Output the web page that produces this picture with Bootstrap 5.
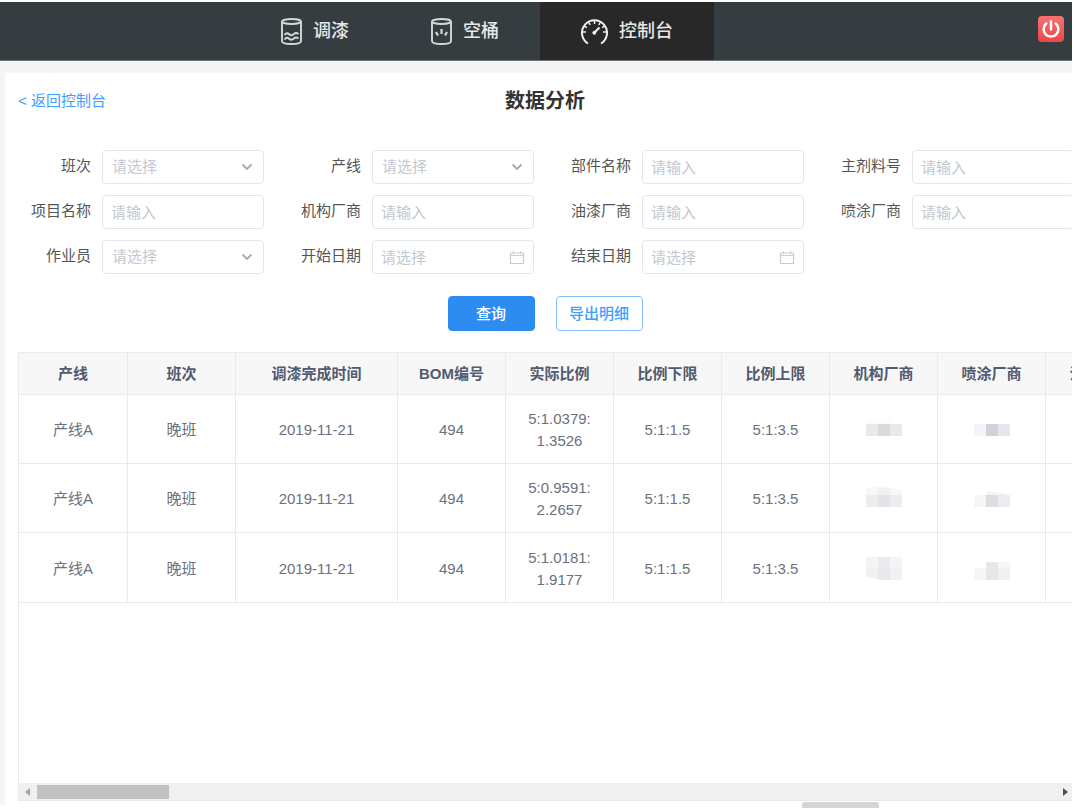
<!DOCTYPE html>
<html lang="zh-CN">
<head>
<meta charset="utf-8">
<meta name="viewport" content="width=device-width, initial-scale=1">
<title>数据分析</title>
<link href="https://cdn.jsdelivr.net/npm/bootstrap@5.3.0/dist/css/bootstrap.min.css" rel="stylesheet">
<style>
  body { font-family: "Liberation Sans", "Noto Sans CJK SC", sans-serif; font-size: 15px; color: #555; background: #fff; padding: 2px 2px 3px 0; overflow: hidden; }
  .top-bar { height: 59px; background: #363d40; padding-left: 240px; padding-right: 8px; border-bottom: 1px solid #6d7274; }
  .top-item { padding: 0 41px; gap: 11px; color: #e6e8e8; font-size: 18px; font-weight: 500; white-space: nowrap; }
  .top-item.active { background: #282828; }
  .top-item svg { display: block; }
  .power-btn { width: 26px; height: 26px; border-radius: 4px; background: linear-gradient(#f57272, #ef4646); margin-bottom: 5px; }
  .page-area { background: #f5f5f5; padding: 12px 0 0 5px; min-height: 0; }
  .panel { background: #fff; padding: 12px 0 4px 13px; min-width: 0; overflow: hidden; }
  .back-link { color: #409eff; line-height: 32px; }
  .page-title { font-size: 20px; line-height: 32px; font-weight: 700; color: #333; }
  .filters { display: grid; grid-template-columns: repeat(4, 246px); gap: 11px 24px; margin-top: 33px; }
  .field-label { width: 84px; padding-right: 11px; line-height: 32px; text-align: right; white-space: nowrap; }
  .field-box { width: 162px; height: 34px; border: 1px solid #e3e6ea; border-radius: 4px; padding: 0 8px; font-size: 15px; line-height: 32px; color: #c3c7cf; background-color: #fff; box-shadow: none; }
  .field-box::placeholder { color: #c3c7cf; opacity: 1; }
  select.field-box { padding-left: 9px; background-image: url("data:image/svg+xml,%3Csvg xmlns='http://www.w3.org/2000/svg' width='12' height='8'%3E%3Cpath d='M1.5 1.5 6 6l4.500-4.500' fill='none' stroke='%23a3a8b4' stroke-width='1.800'/%3E%3C/svg%3E"); background-size: 12px 8px; background-position: right 10px center; }
  .date-box { background-image: url("data:image/svg+xml,%3Csvg xmlns='http://www.w3.org/2000/svg' width='16' height='15'%3E%3Cpath d='M1.500 3h13v10.500h-13zM1.500 5.500h13M4.500 1v3M11.500 1v3' fill='none' stroke='%23c9ccd3' stroke-width='1.200'/%3E%3C/svg%3E"); background-repeat: no-repeat; background-position: right 8px center; }
  .act { width: 87px; height: 35px; padding: 0; font-size: 15px; border-radius: 4px; font-weight: 500; line-height: 31px; }
  .act-main { background: #2d8cf0; border-color: #2d8cf0; color: #fff; }
  .act-line { border-color: #83bdfa; color: #409eff; background: #fff; }
  .grid-box { border: 1px solid #e8eaec; border-right: 0; overflow: hidden; min-height: 0; }
  .data-grid { table-layout: fixed; width: 1243px; color: #6b7180; text-align: center; line-height: 22px; margin: 0; border-collapse: separate; border-spacing: 0; }
  .data-grid th { height: 42px; background: #f7f7f8; color: #515a6e; font-weight: 700; padding: 0; white-space: nowrap; }
  .data-grid td { height: 69px; padding: 2px 16px 0; }
  .data-grid th, .data-grid td { border-right: 1px solid #e8ebed; border-bottom: 1px solid #e8ebed; }
  .data-grid tr:last-child td { height: 70px; }
  .data-grid svg { display: block; margin: 0 auto; }
  .scroll-track { height: 17px; background: #f0f0f0; padding: 0 4px 0 6px; }
  .scroll-thumb { width: 132px; height: 14px; background: #c1c1c1; margin-left: 6px; }
  .page-thumb { width: 77px; height: 6px; right: 195px; bottom: 0; background: #d5d5d5; border-radius: 3px 3px 0 0; }
</style>
</head>
<body class="vh-100 d-flex flex-column position-relative">
<nav class="top-bar d-flex align-items-stretch flex-shrink-0">
  <a href="#" class="top-item d-flex align-items-center text-decoration-none">
    <svg width="21" height="27" viewBox="0 0 21 27" fill="none" stroke="#d5d8d9" stroke-width="1.900"><ellipse cx="10.500" cy="3.500" rx="9.500" ry="2.500"/><path d="M1 3.500V23c0 1.800 4 3 9.500 3s9.500-1.200 9.500-3V3.500"/><path d="M3.500 17q2.200-3 4.600-.8t4.600 0T17.500 16M3.500 21.500q2.200-3 4.600-.8t4.600 0T17.500 20.500"/></svg>
    <span>调漆</span></a>
  <a href="#" class="top-item d-flex align-items-center text-decoration-none">
    <svg width="21" height="27" viewBox="0 0 21 27" fill="none" stroke="#d5d8d9" stroke-width="1.900"><ellipse cx="10.500" cy="3.500" rx="9.500" ry="2.500"/><path d="M1 3.500V23c0 1.800 4 3 9.500 3s9.500-1.200 9.500-3V3.500"/><path stroke-width="2.200" d="M10.500 11v5M5 14l2 3.500M16 14l-2 3.500"/></svg>
    <span>空桶</span></a>
  <a href="#" class="top-item active d-flex align-items-center text-decoration-none" aria-current="page">
    <svg width="27" height="28" viewBox="0 0 27 28" fill="none" stroke="#f0f0f0" stroke-width="2"><path d="M7 26.500A12.500 12.500 0 1 1 20 26.500"/><path stroke-width="1.500" d="M13.500 3v4M7.500 5l1.700 3M19.500 5l-1.700 3M3.200 9l2.700 1.700M23.800 9l-2.700 1.700M1.500 15h3.500M25.500 15H22"/><path stroke-width="2.200" d="m13.500 15.500 5-5"/><circle cx="13.300" cy="15.800" r="1.500" fill="#f0f0f0" stroke-width="1"/></svg>
    <span>控制台</span></a>
  <button type="button" class="power-btn btn border-0 p-0 ms-auto align-self-center d-flex" aria-label="退出">
    <svg width="26" height="26" viewBox="0 0 26 26" fill="none" stroke="#fff" stroke-width="2.500" stroke-linecap="round"><path d="M13 5.500v8M8.300 7.500a7.400 7.400 0 1 0 9.400 0"/></svg>
  </button>
</nav>
<main class="page-area flex-fill d-flex flex-column">
  <section class="panel flex-fill d-flex flex-column">
    <header class="d-flex">
      <div class="col"><a href="#" class="back-link text-decoration-none">&lt; 返回控制台</a></div>
      <h1 class="page-title m-0">数据分析</h1>
      <div class="col"></div>
    </header>
    <form class="d-flex flex-column">
      <div class="filters">
        <div class="d-flex"><label class="field-label" for="shift">班次</label><select id="shift" class="form-select field-box"><option>请选择</option></select></div>
        <div class="d-flex"><label class="field-label" for="line">产线</label><select id="line" class="form-select field-box"><option>请选择</option></select></div>
        <div class="d-flex"><label class="field-label" for="part">部件名称</label><input id="part" type="text" class="form-control field-box" placeholder="请输入"></div>
        <div class="d-flex"><label class="field-label" for="agent">主剂料号</label><input id="agent" type="text" class="form-control field-box" placeholder="请输入"></div>
        <div class="d-flex"><label class="field-label" for="project">项目名称</label><input id="project" type="text" class="form-control field-box" placeholder="请输入"></div>
        <div class="d-flex"><label class="field-label" for="maker">机构厂商</label><input id="maker" type="text" class="form-control field-box" placeholder="请输入"></div>
        <div class="d-flex"><label class="field-label" for="paint">油漆厂商</label><input id="paint" type="text" class="form-control field-box" placeholder="请输入"></div>
        <div class="d-flex"><label class="field-label" for="spray">喷涂厂商</label><input id="spray" type="text" class="form-control field-box" placeholder="请输入"></div>
        <div class="d-flex"><label class="field-label" for="worker">作业员</label><select id="worker" class="form-select field-box"><option>请选择</option></select></div>
        <div class="d-flex"><label class="field-label" for="from">开始日期</label><input id="from" type="text" class="form-control field-box date-box" placeholder="请选择"></div>
        <div class="d-flex"><label class="field-label" for="to">结束日期</label><input id="to" type="text" class="form-control field-box date-box" placeholder="请选择"></div>
      </div>
      <div class="d-flex justify-content-center" style="gap:21px;margin:22px 0 21px">
        <button type="button" class="btn act act-main">查询</button>
        <button type="button" class="btn act act-line">导出明细</button>
      </div>
    </form>
    <div class="grid-box flex-fill d-flex flex-column">
      <div class="flex-fill overflow-hidden">
        <table class="data-grid">
          <colgroup><col style="width:109px"><col style="width:108px"><col style="width:162px"><col span="8" style="width:108px"></colgroup>
          <thead><tr><th>产线</th><th>班次</th><th>调漆完成时间</th><th>BOM编号</th><th>实际比例</th><th>比例下限</th><th>比例上限</th><th>机构厂商</th><th>喷涂厂商</th><th>油漆厂商</th></tr></thead>
          <tbody>
            <tr><td>产线A</td><td>晚班</td><td>2019-11-21</td><td>494</td><td>5:1.0379:<br>1.3526</td><td>5:1:1.5</td><td>5:1:3.5</td>
              <td><svg width="36" height="24"><path fill="#fcfcfc" d="M0 0h24v6H0z"/><path fill="#e8e9ea" d="M0 6h36v12H0z"/><path fill="#d9dade" d="M12 6h12v12H12z"/></svg></td>
              <td><svg width="36" height="24"><path fill="#f4f5f8" d="M0 6h12v12H0z"/><path fill="#d2d3d9" d="M12 6h12v12H12z"/><path fill="#e6e7eb" d="M24 6h12v12H24z"/></svg></td><td></td></tr>
            <tr><td>产线A</td><td>晚班</td><td>2019-11-21</td><td>494</td><td>5:0.9591:<br>2.2657</td><td>5:1:1.5</td><td>5:1:3.5</td>
              <td><svg width="36" height="24"><path fill="#f8f8f8" d="M0 2 8 0l28 2v6H0z"/><path fill="#f1f1f3" d="M12 0l12 1v7H12z"/><path fill="#ececee" d="M0 8h36v12H0z"/><path fill="#e3e4e8" d="M12 8h12v12H12z"/></svg></td>
              <td><svg width="36" height="24"><path fill="#f6f6f7" d="M12 4l20 2v2H12zM0 8h12v12H0z"/><path fill="#dcdde2" d="M12 8h12v12H12z"/><path fill="#ececee" d="M24 8h12v12H24z"/></svg></td><td></td></tr>
            <tr><td>产线A</td><td>晚班</td><td>2019-11-21</td><td>494</td><td>5:1.0181:<br>1.9177</td><td>5:1:1.5</td><td>5:1:3.5</td>
              <td><svg width="36" height="24"><path fill="#f4f4f5" d="M0 0h30l6 1v10H0z"/><path fill="#ebebee" d="M12 0h12v11H12z"/><path fill="#f1f1f3" d="M0 11h36v12H16L0 20z"/><path fill="#e8e9ec" d="M12 11h12v12h-8l-4-1z"/></svg></td>
              <td><svg width="36" height="24"><path fill="#f6f6f7" d="M0 11h12v12H0zM24 5h12v6H24z"/><path fill="#e6e7eb" d="M12 5h12v18H12z"/><path fill="#f0f0f2" d="M24 11h12v12H24z"/></svg></td><td></td></tr>
          </tbody>
        </table>
      </div>
      <div class="scroll-track d-flex align-items-center flex-shrink-0">
        <svg width="6" height="8"><path fill="#a3a3a3" d="M5 0v8L0 4z"/></svg>
        <div class="scroll-thumb"></div>
        <svg class="ms-auto" width="6" height="8"><path fill="#505050" d="M1 0v8l5-4z"/></svg>
      </div>
    </div>
  </section>
</main>
<div class="page-thumb position-absolute"></div>
<script src="https://cdn.jsdelivr.net/npm/bootstrap@5.3.0/dist/js/bootstrap.bundle.min.js"></script>
</body>
</html>
